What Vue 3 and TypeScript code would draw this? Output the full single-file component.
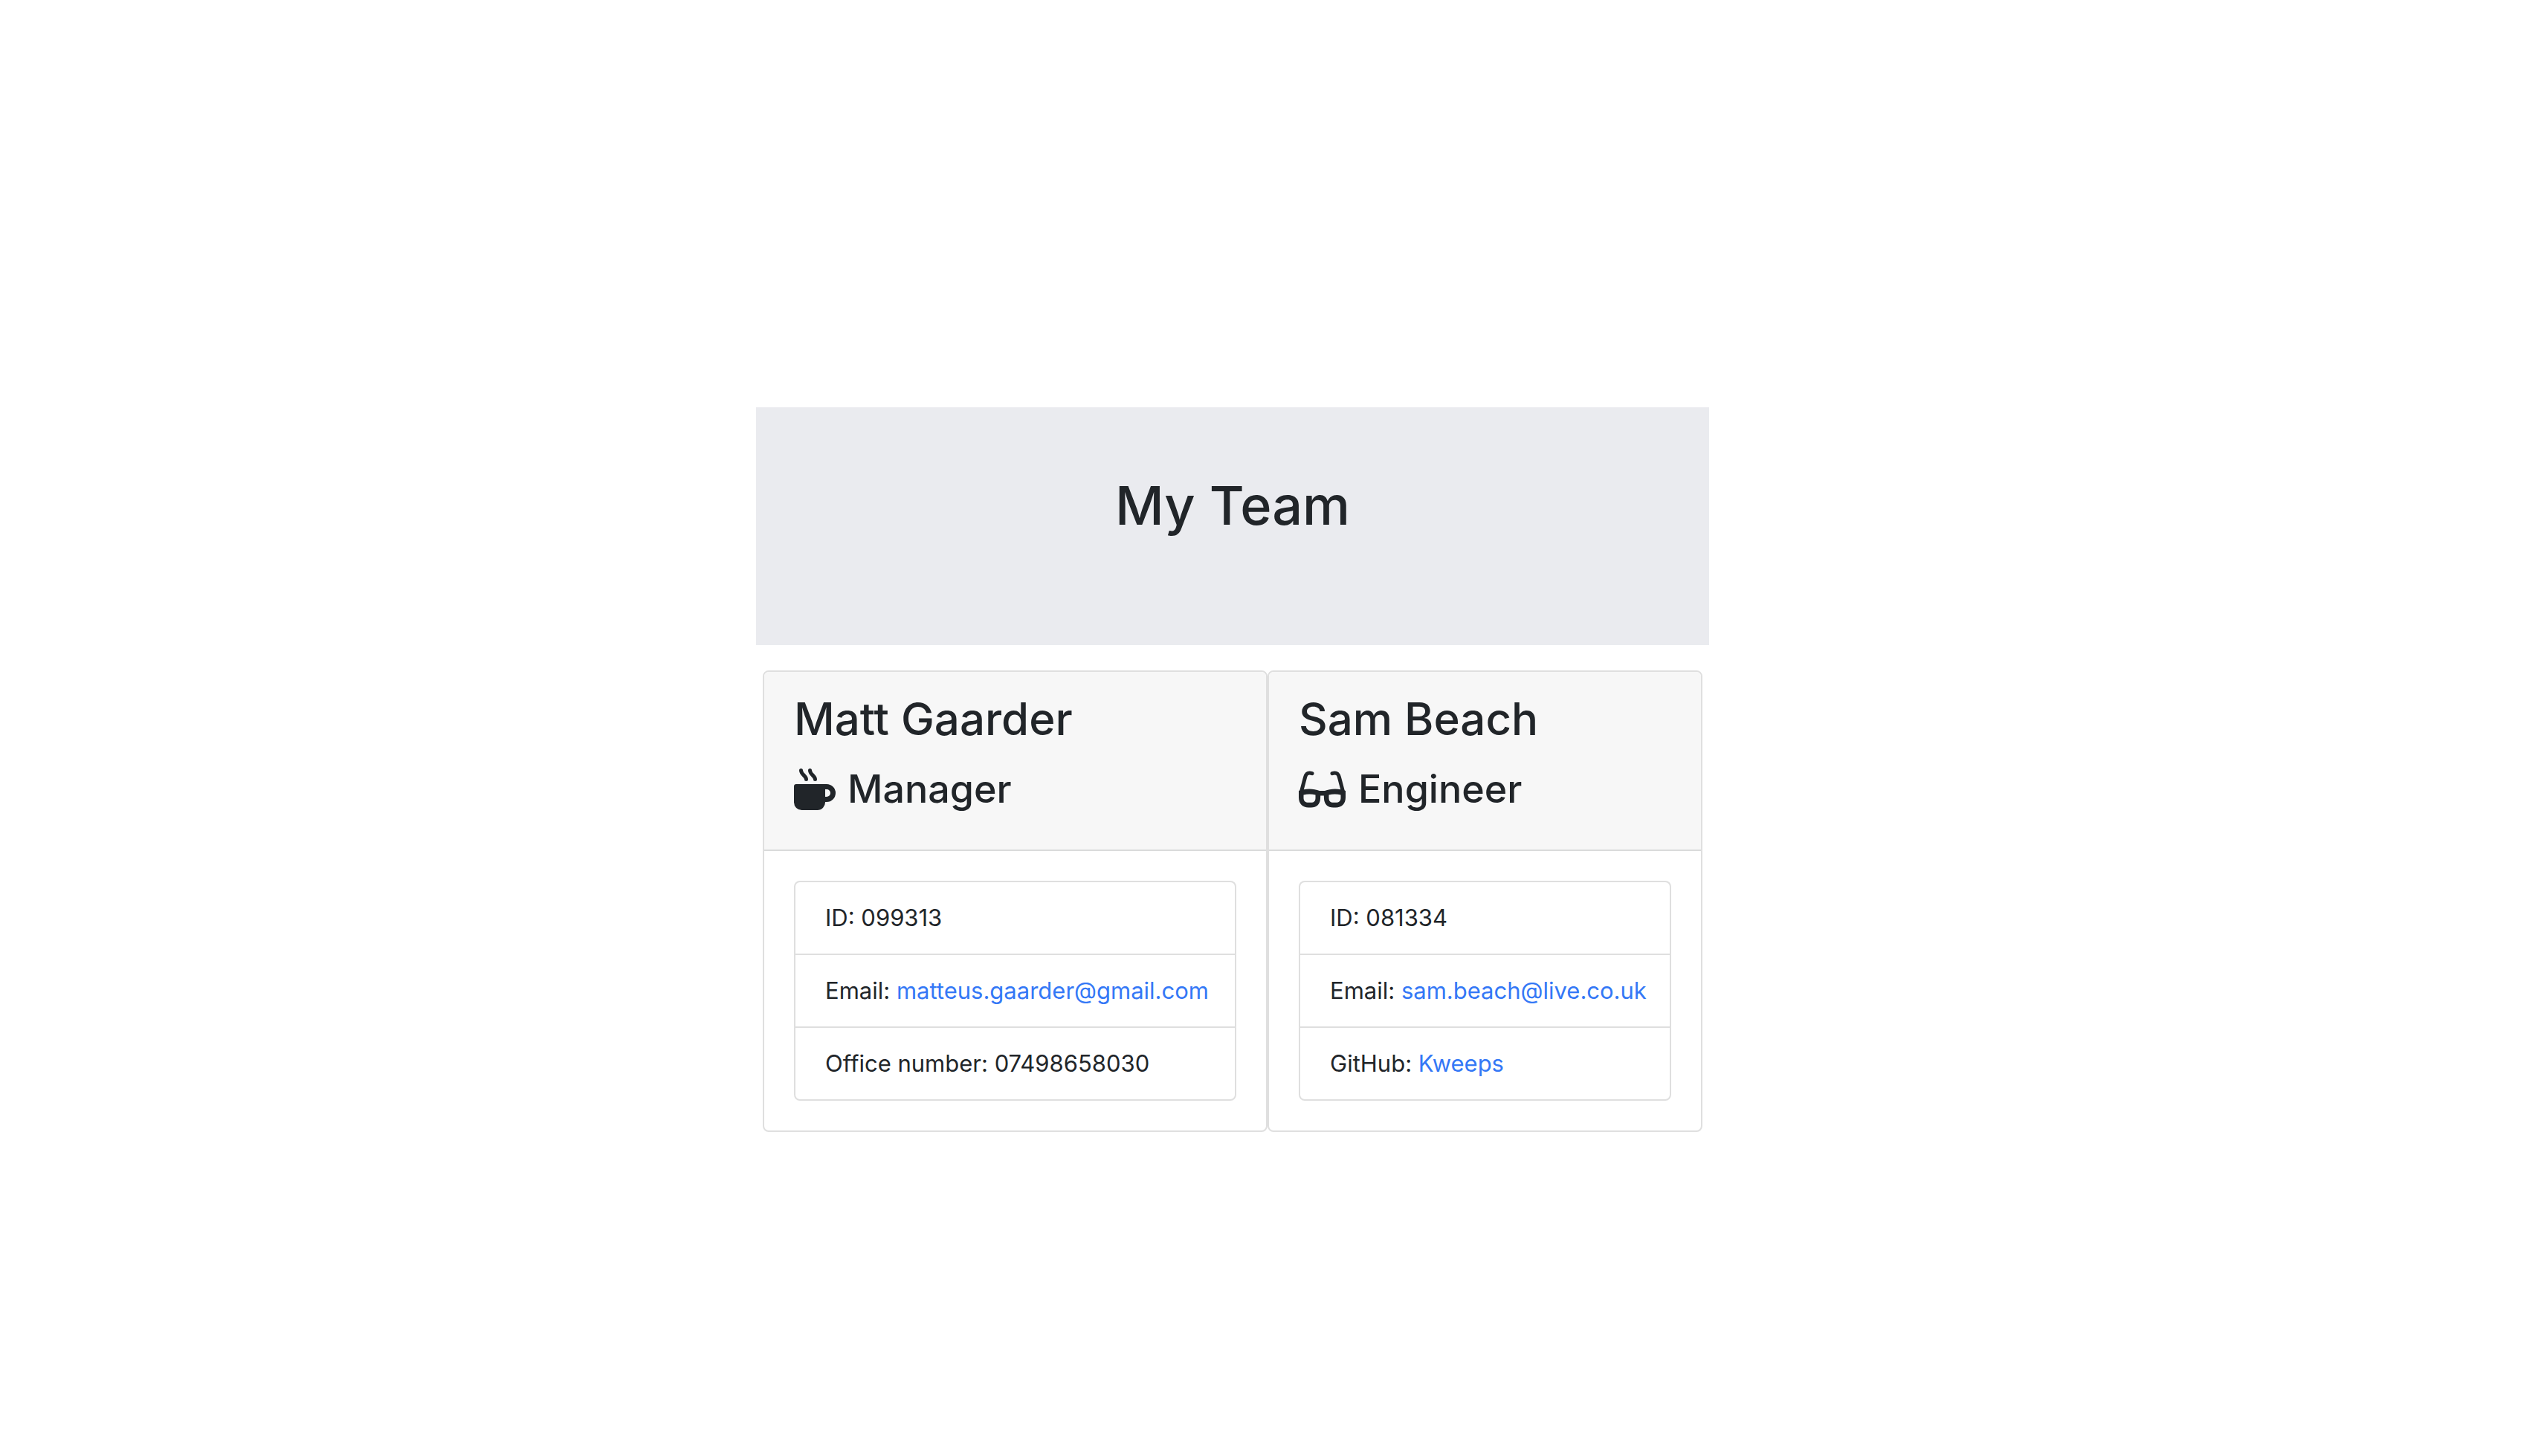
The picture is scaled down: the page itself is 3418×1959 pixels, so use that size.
<script setup lang="ts">
interface Detail {
  label: string
  value: string
  href?: string
}

interface Member {
  name: string
  role: 'Manager' | 'Engineer'
  details: Detail[]
}

const team: Member[] = [
  {
    name: 'Matt Gaarder',
    role: 'Manager',
    details: [
      { label: 'ID', value: '099313' },
      { label: 'Email', value: 'matteus.gaarder@gmail.com', href: 'mailto:matteus.gaarder@gmail.com' },
      { label: 'Office number', value: '07498658030' },
    ],
  },
  {
    name: 'Sam Beach',
    role: 'Engineer',
    details: [
      { label: 'ID', value: '081334' },
      { label: 'Email', value: 'sam.beach@live.co.uk', href: 'mailto:sam.beach@live.co.uk' },
      { label: 'GitHub', value: 'Kweeps', href: 'https://github.com/Kweeps' },
    ],
  },
]
</script>

<template>
  <div class="page">
    <main class="content">
      <header class="banner">
        <h1 class="banner-title">My Team</h1>
      </header>
      <section class="cards">
        <article v-for="member in team" :key="member.name" class="card">
          <div class="card-header">
            <h2 class="name">{{ member.name }}</h2>
            <h3 class="role">
              <svg v-if="member.role === 'Manager'" class="icon mug" viewBox="0 0 56 56" aria-hidden="true">
                <path d="M9.500 2.500C9.500 8 16.500 10 16.500 14.500M21.500 2.500C21.500 8 28.500 10 28.500 14.500" />
                <path class="solid" fill-rule="evenodd" d="M3 21H44A12 12 0 0 1 44 45H42A10.500 10.500 0 0 1 31.500 56H10.500A10.500 10.500 0 0 1 0 45.500V24A3 3 0 0 1 3 21ZM42 28V38H44A5 5 0 0 0 44 28Z" />
              </svg>
              <svg v-else class="icon glasses" viewBox="0 0 64 56" aria-hidden="true">
                <path d="M18 6.700C11 4.500 9.500 8.500 8.500 12L3 33M45 6.700C52 4.500 53.500 8.500 54.500 12L60 33" />
                <path class="solid" fill-rule="evenodd" d="M0 30C8 26.500 20 26.500 28 30H35C43 26.500 55 26.500 63 30V39C63 47.500 57.500 52.500 50 52.500H46.500C39 52.500 34.500 48 34 41L33.800 36.500H29.200L29 41C28.500 48 24 52.500 16.500 52.500H13C5.500 52.500 0 47.500 0 39ZM6.500 35.500V39.500C6.500 43.800 9 45.800 13 45.800H16.500C20.500 45.800 22.500 43.800 22.500 39.500V35.500C17.500 34 11.500 34 6.500 35.500ZM40.500 35.500V39.500C40.500 43.800 42.500 45.800 46.500 45.800H50C54 45.800 56.500 43.800 56.500 39.500V35.500C51.500 34 45.500 34 40.500 35.500Z" />
              </svg>
              <span>{{ member.role }}</span>
            </h3>
          </div>
          <div class="card-body">
            <ul class="details">
              <li v-for="detail in member.details" :key="detail.label" class="detail">
                {{ detail.label }}:
                <a v-if="detail.href" :href="detail.href">{{ detail.value }}</a>
                <template v-else>{{ detail.value }}</template>
              </li>
            </ul>
          </div>
        </article>
      </section>
    </main>
  </div>
</template>

<style>
body {
  margin: 0;
  background: #fff;
}
</style>

<style scoped>
.page {
  display: grid;
  grid-template-columns: 1017fr 1282fr 1119fr;
  padding: 548px 0 120px;
  font-family: Inter, "Liberation Sans", sans-serif;
  color: #212529;
}

.content {
  grid-column: 2;
  min-width: 0;
}

.banner {
  padding: 84px 40px 140px;
  background: #eaebef;
  text-align: center;
}

.banner-title,
.name,
.role {
  margin: 0;
  font-weight: 500;
}

.banner-title {
  font-size: 72px;
  line-height: 96px;
}

.cards {
  display: grid;
  grid-template-columns: 679fr 585fr;
  padding: 0 9px;
  margin-top: 34px;
}

.card {
  min-width: 0;
  border: 2px solid #dfdfdf;
  border-radius: 8px;
  background: #fff;
  overflow: hidden;
}

.card-header {
  display: flex;
  flex-direction: column;
  gap: 23px;
  padding: 24px 40px 48px;
  border-bottom: 2px solid #dadbdb;
  background: #f7f7f7;
}

.name {
  font-size: 60px;
  line-height: 78px;
}

.role {
  display: flex;
  align-items: center;
  gap: 16px;
  font-size: 52px;
  line-height: 66px;
}

.icon {
  flex: none;
  height: 56px;
  fill: none;
  stroke: currentColor;
  stroke-width: 5;
  stroke-linecap: round;
}

.solid {
  fill: currentColor;
  stroke: none;
}

.mug {
  width: 56px;
}

.glasses {
  width: 64px;
}

.card-body {
  padding: 40px;
}

.details {
  margin: 0;
  padding: 0;
  border: 2px solid #dfdfdf;
  border-radius: 8px;
  list-style: none;
}

.detail {
  padding: 24px 40px;
  font-size: 31px;
  line-height: 48px;
  white-space: nowrap;
}

.detail + .detail {
  border-top: 2px solid #dfdfdf;
}

.detail a {
  color: #3478f6;
  text-decoration: none;
}
</style>
